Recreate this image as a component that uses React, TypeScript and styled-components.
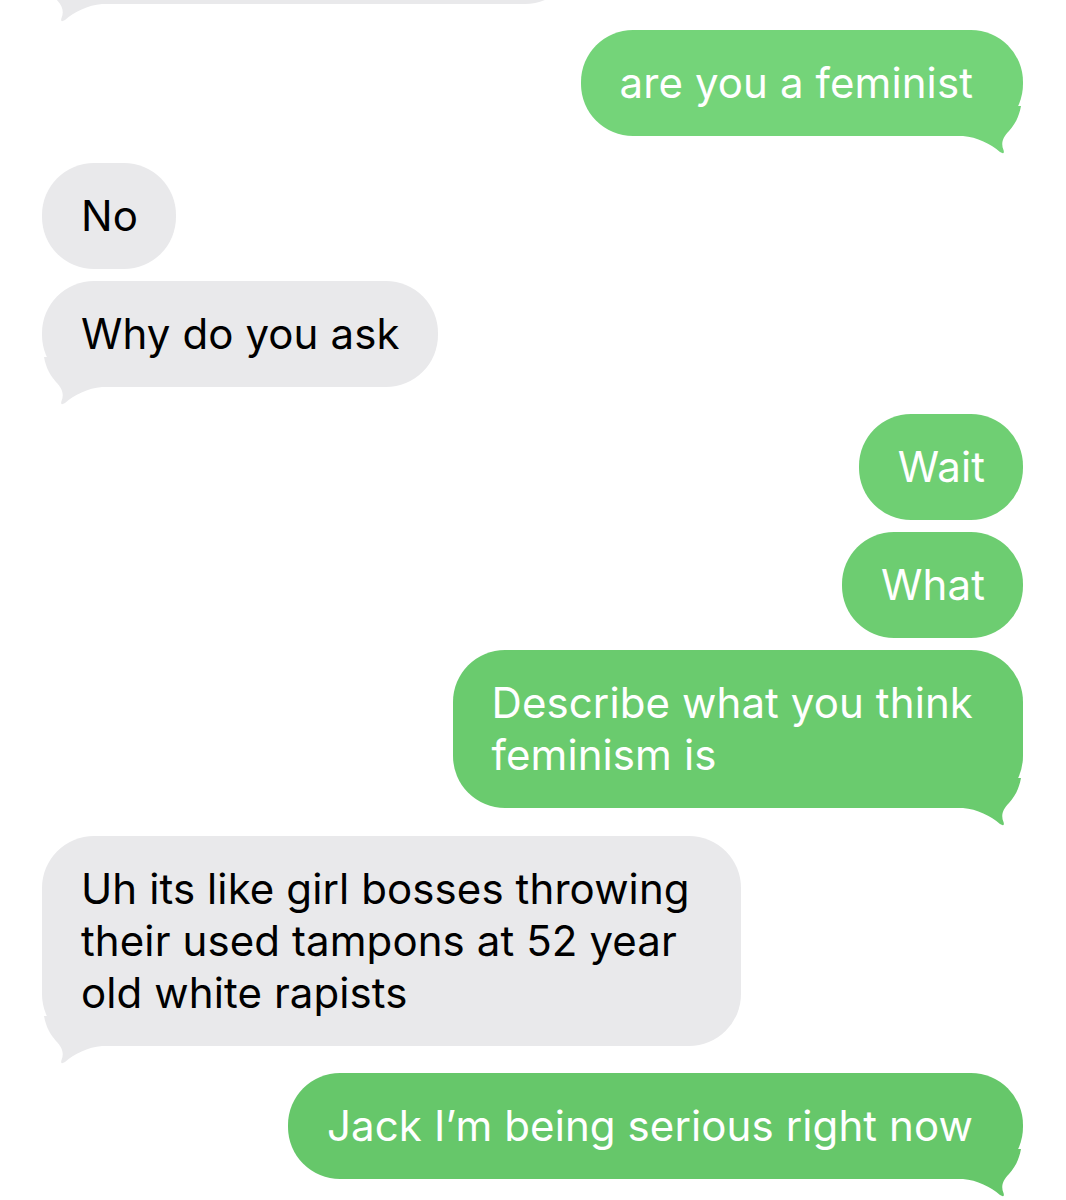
import React from "react";
import styled, { createGlobalStyle } from "styled-components";

const Global = createGlobalStyle`
  html, body { margin: 0; padding: 0; background: #ffffff; }
  body { font-family: Inter, "Noto Sans", "Liberation Sans", sans-serif; -webkit-font-smoothing: antialiased; }
`;

const Thread = styled.div`
  width: 1066px;
  height: 1200px;
  overflow: hidden;
  box-sizing: border-box;
  padding: 0 43px 0 42px;
  display: flex;
  flex-direction: column;
`;

const Row = styled.div<{ $side: "in" | "out"; $gap: number }>`
  display: flex;
  justify-content: ${(p) => (p.$side === "out" ? "flex-end" : "flex-start")};
  margin-top: ${(p) => p.$gap}px;
`;

const Bubble = styled.div<{ $side: "in" | "out"; $bg: string; $padR: number }>`
  position: relative;
  box-sizing: border-box;
  padding: 27px ${(p) => p.$padR}px 27px 39px;
  border-radius: 52px;
  background: ${(p) => p.$bg};
  color: ${(p) => (p.$side === "out" ? "#ffffff" : "#000000")};
  font-size: 42px;
  line-height: 52px;
  letter-spacing: 0.1px;
  white-space: nowrap;
`;

const Cut = styled(Bubble)<{ $w: number }>`
  width: ${(p) => p.$w}px;
  height: 120px;
`;

const TailSvg = styled.svg<{ $side: "in" | "out" }>`
  position: absolute;
  bottom: -18px;
  width: 64px;
  height: 48px;
  ${(p) => (p.$side === "out" ? "right: 0;" : "left: 0; transform: scaleX(-1);")}
`;

const Tail = ({ side, color }: { side: "in" | "out"; color: string }) => (
  <TailSvg $side={side} viewBox="0 0 64 48">
    <path
      d="M4 30 C18 31 32 38 41 46 Q46 49 44.5 44 C42 38 43 32 50 25 C56 18 60 11 62 0 L4 0 Z"
      fill={color}
    />
  </TailSvg>
);

const GREY = "#e9e9eb";

type Msg = {
  side: "in" | "out";
  lines: string[];
  gap: number;
  tail?: boolean;
  bg?: string;
  padR?: number;
};

const messages: Msg[] = [
  { side: "out", lines: ["are you a feminist"], gap: 26, tail: true, bg: "#74d479", padR: 50 },
  { side: "in", lines: ["No"], gap: 27 },
  { side: "in", lines: ["Why do you ask"], gap: 12, tail: true },
  { side: "out", lines: ["Wait"], gap: 27, bg: "#6fcf73" },
  { side: "out", lines: ["What"], gap: 12, bg: "#6dcd71" },
  { side: "out", lines: ["Describe what you think", "feminism is"], gap: 12, tail: true, bg: "#6acb6e", padR: 50 },
  {
    side: "in",
    lines: ["Uh its like girl bosses throwing", "their used tampons at 52 year", "old white rapists"],
    gap: 28,
    tail: true,
    padR: 51,
  },
  { side: "out", lines: ["Jack I\u2019m being serious right now"], gap: 27, tail: true, bg: "#66c76a", padR: 50 },
];

export default function App() {
  return (
    <>
      <Global />
      <Thread>
        <Row $side="in" $gap={-116}>
          <Cut $side="in" $bg={GREY} $w={535} $padR={38}>
            <Tail side="in" color={GREY} />
          </Cut>
        </Row>
        {messages.map((m, i) => {
          const bg = m.side === "in" ? GREY : m.bg || "#6ccc70";
          return (
            <Row key={i} $side={m.side} $gap={m.gap}>
              <Bubble $side={m.side} $bg={bg} $padR={m.padR ?? 38}>
                {m.lines.map((l, j) => (
                  <React.Fragment key={j}>
                    {j > 0 && <br />}
                    {l}
                  </React.Fragment>
                ))}
                {m.tail && <Tail side={m.side} color={bg} />}
              </Bubble>
            </Row>
          );
        })}
      </Thread>
    </>
  );
}
